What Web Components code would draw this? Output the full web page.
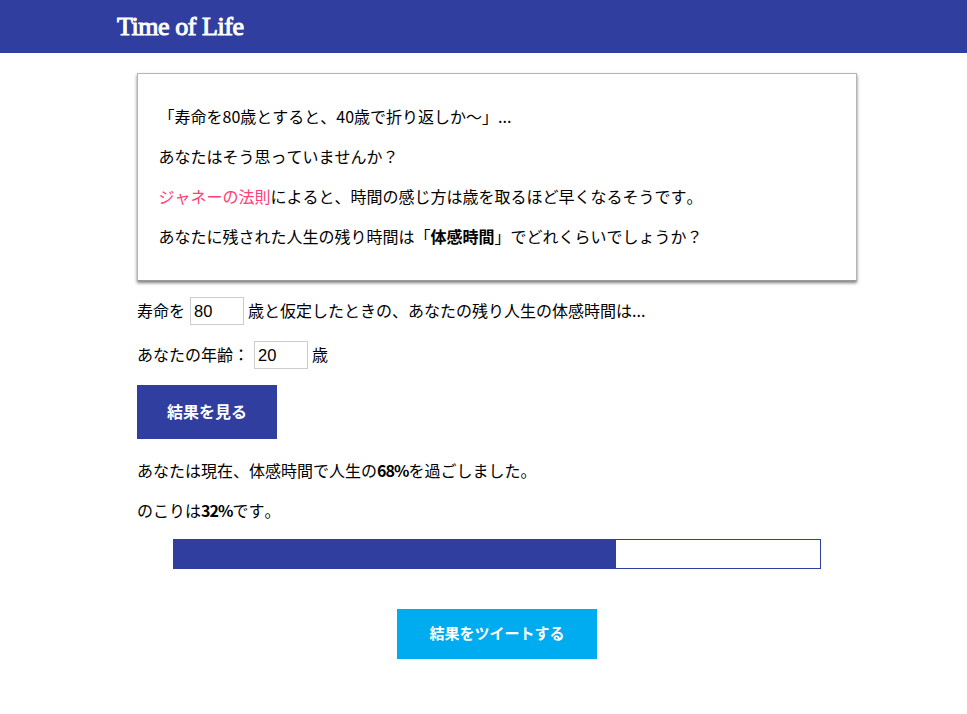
<!DOCTYPE html>
<html lang="ja"><head><meta charset="utf-8"><title>Time of Life</title>
<style>
body{margin:0;background:#fff;color:#000;font:16px/24px "Noto Sans CJK JP",sans-serif;font-kerning:none}
</style></head><body>
<life-app></life-app>
<script>
const define=(name,html)=>customElements.define(name,class extends HTMLElement{
 constructor(){super();this.attachShadow({mode:'open'}).innerHTML=html;}
 connectedCallback(){
  const input=this.shadowRoot.querySelector('input');
  if(input)input.value=this.getAttribute('value');
 }
});
define('site-header',`<style>:host{display:block;height:53px;background:#303f9f;color:#fff}
h1{margin:0;padding-left:117px;font:400 26px/53px "Liberation Serif",serif;letter-spacing:-.45px;-webkit-text-stroke:1px #fff;white-space:nowrap}</style><h1><slot></slot></h1>`);
define('text-line',`<style>:host{display:block;box-sizing:border-box;height:24px;white-space:nowrap;line-height:22px}
:host([field]){display:flex;align-items:center;height:28px}</style><slot></slot>`);
define('intro-card',`<style>:host{display:flex;flex-direction:column;gap:16px;box-sizing:border-box;height:208px;padding:31px 20.5px;border:1px solid #b5b5b5;border-bottom-color:#999;box-shadow:0 2px 3px rgba(0,0,0,.5)}</style><slot></slot>`);
define('number-box',`<style>:host{display:block;flex:none;margin:0 4px 0 5px}
input{display:block;box-sizing:border-box;width:54px;height:28px;margin:0;border:1px solid #ccc;border-radius:0;padding:1px 3px 0;background:#fff;color:#000;font:16.5px "Liberation Sans",sans-serif;outline:0}</style><input type="text" inputmode="numeric">`);
define('action-button',`<style>:host{display:block;width:140px;height:54px}
button{display:block;width:100%;height:100%;margin:0;border:0;padding:0 0 3px;background:#303f9f;color:#fff;font:inherit;font-weight:700}
:host([tweet]){width:200px;height:50px;font-size:15px}
:host([tweet]) button{background:#00acf0;padding-bottom:2px}</style><button><slot></slot></button>`);
define('life-bar',`<style>:host{display:block;box-sizing:border-box;width:648px;height:30px;border:1px solid #303f9f}div{width:442px;height:100%;background:#303f9f}</style><div></div>`);
define('life-app',`<style>:host{display:block}main{display:flex;flex-direction:column;gap:16px;width:720px;margin-left:137px;padding-top:20px}
b{font-weight:700}b.rate{letter-spacing:-.9px}a{color:#ff4074}action-button{margin-bottom:4px}
life-bar{align-self:center}action-button[tweet]{align-self:center;margin-top:24px}
text-line[field] span{padding-bottom:2px}</style>
<site-header>Time of Life</site-header><main><intro-card>
<text-line>「寿命を80歳とすると、40歳で折り返しか〜」...</text-line>
<text-line>あなたはそう思っていませんか？</text-line>
<text-line><a>ジャネーの法則</a>によると、時間の感じ方は歳を取るほど早くなるそうです。</text-line>
<text-line>あなたに残された人生の残り時間は「<b>体感時間</b>」でどれくらいでしょうか？</text-line></intro-card>
<text-line field><span>寿命を</span><number-box value="80"></number-box><span>歳と仮定したときの、あなたの残り人生の体感時間は...</span></text-line>
<text-line field><span>あなたの年齢：</span><number-box value="20"></number-box><span>歳</span></text-line>
<action-button>結果を見る</action-button>
<text-line>あなたは現在、体感時間で人生の<b class="rate">68%</b>を過ごしました。</text-line>
<text-line>のこりは<b class="rate">32%</b>です。</text-line>
<life-bar></life-bar>
<action-button tweet>結果をツイートする</action-button></main>`);
</script></body></html>
